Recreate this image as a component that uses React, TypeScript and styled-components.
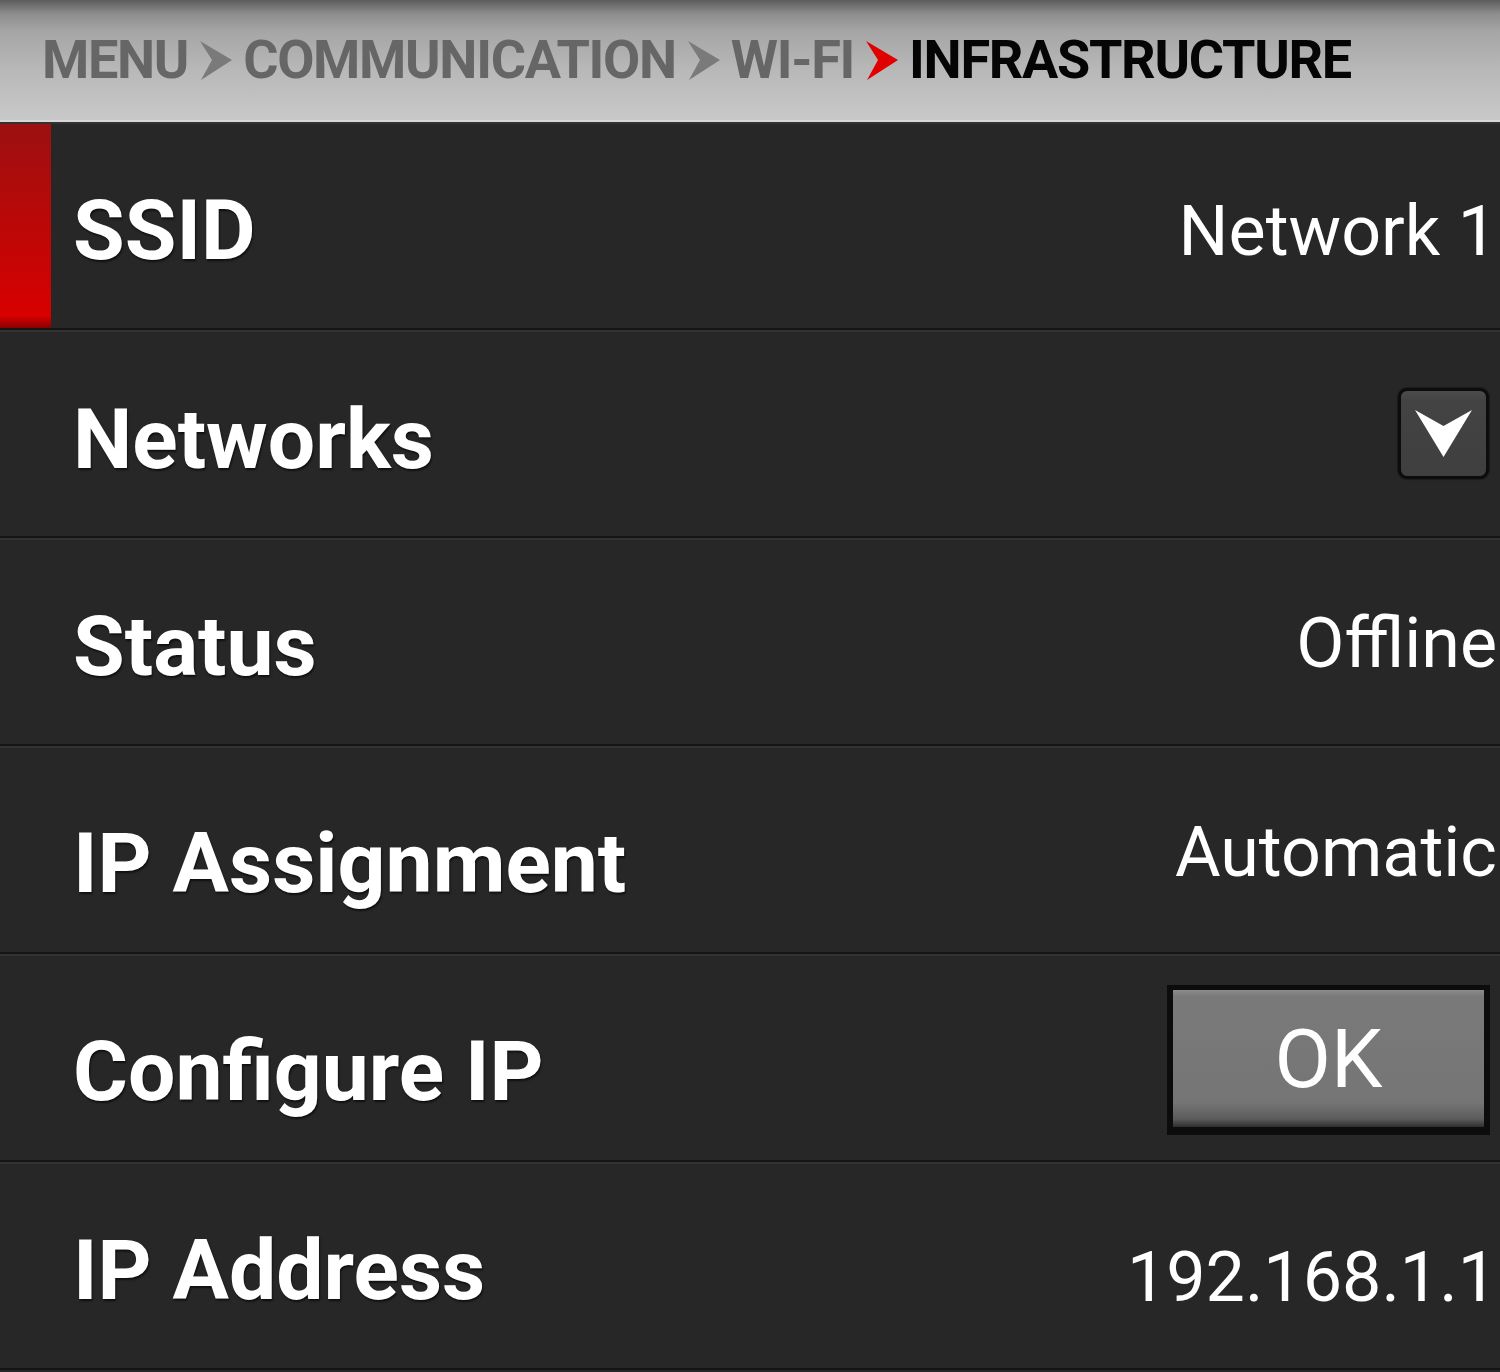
import React from "react";
import styled, { createGlobalStyle } from "styled-components";

const Global = createGlobalStyle`
  html, body { margin: 0; padding: 0; background: #272727; }
  body { font-family: Roboto, "Noto Sans", sans-serif; overflow: hidden; }
`;

const Screen = styled.div`
  width: 1500px;
  height: 1372px;
  display: flex;
  flex-direction: column;
  background: #272727;
  overflow: hidden;
`;

const Header = styled.div`
  height: 120px;
  flex: none;
  display: flex;
  align-items: center;
  padding-left: 42px;
  background: linear-gradient(to bottom, #5c5c5c 0px, #8e8e8e 14px, #a6a6a6 32px, #b8b8b8 70px, #c8c8c8 118px);
  border-bottom: 2px solid #d8d8d8;
`;

const Crumb = styled.span<{ $active?: boolean }>`
  font-family: Roboto, sans-serif;
  font-weight: 700;
  font-size: 54px;
  letter-spacing: -1.3px;
  line-height: 1;
  color: ${(p) => (p.$active ? "#050505" : "#666666")};
  white-space: nowrap;
`;

const Sep = styled.svg`
  flex: none;
  margin: 2px 11px 0 11px;
`;

const List = styled.div`
  flex: 1;
  display: flex;
  flex-direction: column;
`;

const Row = styled.div`
  position: relative;
  height: 206px;
  flex: none;
  display: flex;
  align-items: center;
  background: #272727;
  border-top: 2px solid #323232;
  box-shadow: inset 0 -2px 0 #151515;
`;

const Marker = styled.div`
  position: absolute;
  left: 0;
  top: 0;
  bottom: 2px;
  width: 51px;
  background: linear-gradient(to bottom, #9c1010, #d80000 94%, #8a0000);
`;

const Label = styled.div<{ $shift: number }>`
  padding-left: 73px;
  font-size: 84px;
  font-weight: 700;
  color: #ffffff;
  text-shadow: 1px 2px 2px rgba(0, 0, 0, 0.6);
  white-space: nowrap;
  flex: 1;
  margin-top: ${(p) => p.$shift * 2}px;
`;

const Value = styled.div<{ $shift: number }>`
  font-size: 70px;
  font-weight: 400;
  color: #ffffff;
  white-space: nowrap;
  margin-right: 3px;
  margin-top: ${(p) => p.$shift * 2}px;
`;

const DropButton = styled.div`
  width: 85px;
  height: 85px;
  margin-right: 11px;
  margin-top: -4px;
  border-radius: 9px;
  border: 3px solid #0c0c0c;
  background: linear-gradient(to bottom, #4c4c4c, #434343 12%, #3f3f3f);
  display: flex;
  align-items: center;
  justify-content: center;
  box-shadow: 0 0 2px #000;
`;

const OkButton = styled.div`
  width: 323px;
  height: 150px;
  margin-right: 10px;
  margin-top: 2px;
  box-sizing: border-box;
  border-style: solid;
  border-color: #0c0c0c;
  border-width: 5px 6px 8px 6px;
  background: linear-gradient(to bottom, #8c8c8c 0px, #7a7a7a 6px, #757575 82%, #5c5c5c 94%, #2e2e2e 100%);
  display: flex;
  align-items: center;
  justify-content: center;
  font-size: 82px;
  color: #ffffff;
`;

const Chevron = ({ color }: { color: string }) => (
  <Sep width="33" height="40" viewBox="0 0 33 40">
    <path d="M1 0 L33 19 L2 39 L13 19 Z" fill={color} />
  </Sep>
);

type RowData = {
  label: string;
  value?: string;
  kind?: "drop" | "ok";
  active?: boolean;
  lShift: number;
  vShift: number;
};

const rows: RowData[] = [
  { label: "SSID", value: "Network 1", active: true, lShift: 3, vShift: 4 },
  { label: "Networks", kind: "drop", lShift: 4, vShift: 0 },
  { label: "Status", value: "Offline", lShift: 3, vShift: 0 },
  { label: "IP Assignment", value: "Automatic", lShift: 12, vShift: 1 },
  { label: "Configure IP", kind: "ok", lShift: 12, vShift: 0 },
  { label: "IP Address", value: "192.168.1.1", lShift: 3, vShift: 10 },
];

const crumbs = ["MENU", "COMMUNICATION", "WI-FI"];

export default function App() {
  return (
    <Screen>
      <Global />
      <Header>
        {crumbs.map((c, i) => (
          <React.Fragment key={c}>
            <Crumb>{c}</Crumb>
            <Chevron color={i === crumbs.length - 1 ? "#e00000" : "#7a7a7a"} />
          </React.Fragment>
        ))}
        <Crumb $active>INFRASTRUCTURE</Crumb>
      </Header>
      <List>
        {rows.map((r) => (
          <Row key={r.label}>
            {r.active && <Marker />}
            <Label $shift={r.lShift}>{r.label}</Label>
            {r.value && <Value $shift={r.vShift}>{r.value}</Value>}
            {r.kind === "drop" && (
              <DropButton>
                <svg width="57" height="47" viewBox="0 0 57 47">
                  <path d="M0 0 L28.5 16 L57 0 L28.5 47 Z" fill="#ffffff" />
                </svg>
              </DropButton>
            )}
            {r.kind === "ok" && <OkButton>OK</OkButton>}
          </Row>
        ))}
      </List>
    </Screen>
  );
}
